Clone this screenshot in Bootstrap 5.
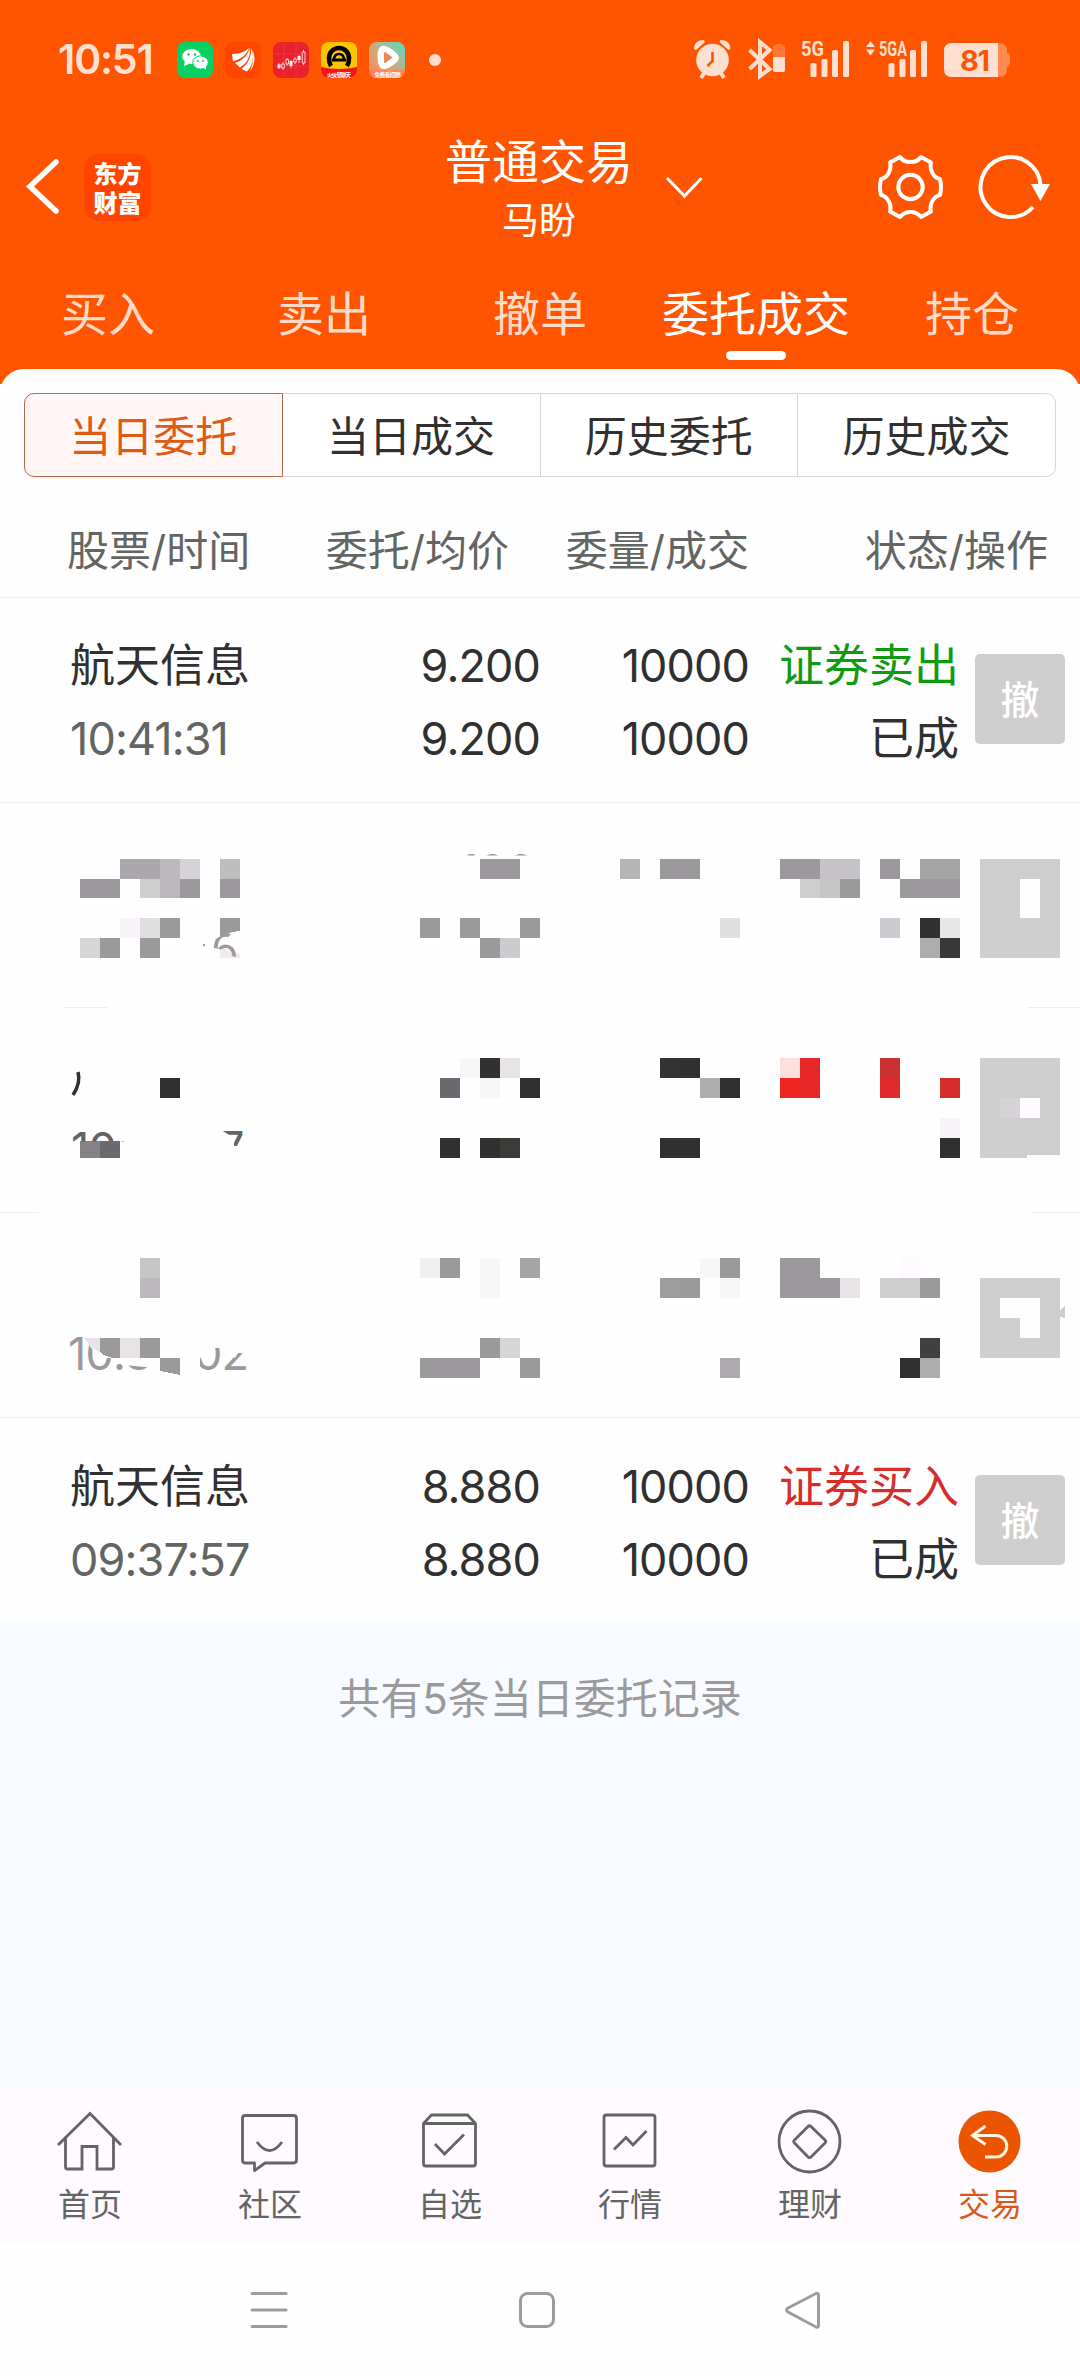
<!DOCTYPE html>
<html lang="zh-CN">
<head>
<meta charset="utf-8">
<meta name="viewport" content="width=device-width, initial-scale=1">
<title>普通交易</title>
<link href="https://cdn.jsdelivr.net/npm/bootstrap@5.3.0/dist/css/bootstrap.min.css" rel="stylesheet">
<style>
  body { width: 1080px; height: 2376px; overflow: hidden; background: #fefefe; color: #303030;
    font-family: Inter, "Noto Sans CJK SC", sans-serif; font-size: 45px; line-height: 1; }
  svg { display: block; flex: none; }
  .top-zone { background: #ff5500; height: 384px; }
  .status-strip { height: 120px; padding: 0 70px 0 58px; color: #ffdfcf; }
  .clock { font-size: 41px; font-weight: 600; width: 119px; letter-spacing: -1.2px; margin-top: -2px; }
  .title-bar { height: 134px; padding-left: 26px; padding-right: 29px; }
  .brand-tile { width: 67px; height: 67px; margin-left: 25px; padding-bottom: 1px; border-radius: 15px; background: #ff4400; font: 900 24px/29px "Noto Sans CJK SC", sans-serif; }
  .title-main { font-size: 47px; line-height: 64px; padding-top: 4px; }
  .title-sub { font-size: 37px; line-height: 54px; }
  .trade-tabs { height: 115px; }
  .trade-tabs .nav-link { flex: 0 0 216px; width: 216px; padding: 35px 0 0; font-size: 47px; line-height: 50px; color: #ffdbc8; border-radius: 0; height: 115px; text-align: center; }
  .trade-tabs .nav-link.active { color: #fff; background: none; }
  .trade-tabs .active::after { content: ""; display: block; width: 60px; height: 9px; border-radius: 5px; background: #fff; margin: 12px auto 0; }
  .sheet { background: #fefefe; border-radius: 24px 24px 0 0; margin-top: -15px; height: 132px; padding: 24px 24px 0; }
  .seg .btn { height: 84px; padding: 4px 0 0; font-size: 42px; line-height: 1; color: #303030; background: #fff; border: 1px solid #d6d5da; border-radius: 10px; }
  .seg .btn.active { color: #dd5b12; background: #fff6f5; border-color: #b5694a; }
  .col-heads { height: 97px; padding: 3px 32px 0 67px; color: #636563; font-size: 42px; border-bottom: 1px solid #eee; box-shadow: inset 0 1px #fafafa; white-space: nowrap; }
  .order-row { height: 205px; padding: 4px 15px 0 70px; line-height: 73px; border-bottom: 1px solid #eee; }
  .order-row:last-child { border-bottom: 0; }
  .c-name { width: 239px; } .c-price { width: 231px; } .c-qty { width: 209px; } .c-state { width: 210px; }
  .num { letter-spacing: -.9px; }
  .time-text { color: #636563; }
  .sell { color: #109a10; } .buy { color: #d62d2b; }
  .btn-cancel { width: 90px; height: 90px; margin-top: -6px; padding: 0; border: 0; border-radius: 5px; background: #cecece; color: #fff; font-size: 39px; font-weight: 500; line-height: 92px; }
  .masked { height: 205px; shape-rendering: crispEdges; }
  .rest { height: 465px; background: #f7faff; color: #9c999b; font-size: 42px; padding-top: 55px; }
  .dock { height: 156px; background: #fefaff; color: #636563; font-size: 32px; }
  .dock > div { width: 180px; padding-top: 17px; line-height: 46px; }
  .dock svg { margin-bottom: 5px; }
  .dock .on { color: #d95a18; }
  .sys { height: 132px; }
</style>
</head>
<body>
<header class="top-zone">
  <div class="status-strip d-flex align-items-center">
    <span class="clock">10:51</span>
    <svg width="270" height="40" viewBox="177 40 270 40">
      <defs>
        <linearGradient id="vid" x1="0" y1="1" x2="1" y2="0"><stop offset="0" stop-color="#ff8a50"/><stop offset=".45" stop-color="#d8a478"/><stop offset="1" stop-color="#4fe0c8"/></linearGradient>
        <clipPath id="tile4"><rect x="321" y="42" width="36" height="36" rx="8"/></clipPath>
        <clipPath id="tile5"><rect x="369" y="42" width="36" height="36" rx="8"/></clipPath>
      </defs>
      <rect x="177" y="42" width="36" height="36" rx="8" fill="#07d165"/>
      <ellipse cx="191.500" cy="56.500" rx="9.300" ry="7.500" fill="#fff"/><path d="M185 61l-1 5 5-2z" fill="#fff"/>
      <ellipse cx="200.500" cy="62.500" rx="7.800" ry="6.600" fill="#fff" stroke="#07d165"/><path d="M203 67l3 3v-5z" fill="#fff"/>
      <g fill="#07d165"><circle cx="188.500" cy="54.500" r="1.200"/><circle cx="195" cy="54.500" r="1.200"/><circle cx="198" cy="61" r="1"/><circle cx="203" cy="61" r="1"/></g>
      <rect x="225" y="42" width="36" height="36" rx="8" fill="#ff4500"/>
      <path d="M232 54Q243 54 249 48Q247 57 233 61.500ZM235 63Q247 59 250 48Q251 61 240 67.500ZM241.500 69Q251 62 251.500 48Q256 62 247 71.500ZM249 72Q255 63 252.500 50Q258 62 249 72Z" fill="#fff"/>
      <rect x="273" y="42" width="36" height="36" rx="8" fill="#e8212c"/>
      <path d="M274 54h34M274 66h34M284 43v34M296 43v34" stroke="#f04a50" stroke-width=".5"/>
      <path d="M279 63v6M283 62v8M287 58v8M291 60v8M295 57v7M299 55v8M303.500 50v15" stroke="#ffd9d9" stroke-width=".8"/>
      <path d="M277.500 64.500h3v3.500h-3zM289.500 61h3v5h-3zM297.500 56h3v4h-3z" fill="#fff"/>
      <path d="M281.700 64h2.600v4h-2.600zM286 59.500h2.500v4.500H286zM293.700 59h2.600v3h-2.600zM302.200 52h2.800v11h-2.800z" fill="#e8212c" stroke="#fff" stroke-width=".8"/>
      <g clip-path="url(#tile4)"><rect x="321" y="42" width="36" height="36" fill="#ffc400"/><path d="M321 67q18 4 36 0v11h-36z" fill="#f0141e"/>
        <path d="M331 66q-2-3-2-8a10 10 0 0 1 20 0q0 5-2 8" fill="none" stroke="#000" stroke-width="4.600"/><path d="M332 60h14" stroke="#000" stroke-width="3"/><path d="M334 60q0-6 5-6t5 6" fill="none" stroke="#000" stroke-width="2.400"/>
        <text x="339" y="76.500" font-size="5.600" font-weight="700" fill="#fff" text-anchor="middle" textLength="24">火伙皇聊天</text></g>
      <g clip-path="url(#tile5)"><rect x="369" y="42" width="36" height="36" fill="url(#vid)"/><path d="M369 67q18 6 36 2v9h-36z" fill="#fb8458"/>
        <path d="M382 48c-4 2-3 18 1 19 3 1 14-6 14-9s-11-12-15-10z" fill="#fff" stroke="#fff" stroke-width="4" stroke-linejoin="round"/><path d="M385 53v9l6-4.500z" fill="#e58b50" stroke="#e58b50" stroke-width="2" stroke-linejoin="round"/>
        <text x="387.500" y="76.500" font-size="5.600" font-weight="700" fill="#fff" text-anchor="middle" textLength="26">免费看短剧</text></g>
      <circle cx="435" cy="60" r="6" fill="#ffdfcf"/>
    </svg>
    <svg class="ms-auto" width="317" height="60" viewBox="693 30 317 60" fill="#ffdfcf">
      <circle cx="712.500" cy="60" r="16.300"/><path d="M704 73l-3 5M721 73l3 5" stroke="#ffdfcf" stroke-width="4"/>
      <path d="M694 49c0-6 4-9 10-9l1 2-9 8zM730.500 49c0-6-4-9-10-9l-1 2 9 8z"/>
      <path d="M712.500 52v9l-5 5" fill="none" stroke="#ff5500" stroke-width="2.600"/>
      <path d="M749.500 50l20 19-9.500 7V42l9.500 8-20 19" fill="none" stroke="#ffdfcf" stroke-width="4"/>
      <path d="M773 57v-10q0-2 2-2h1v-1h6v1h1q2 0 2 2v10z" fill="#ff7733"/><path d="M773 57h12v13q0 2-2 2h-8q-2 0-2-2z"/>
      <text x="801" y="55.500" font-family="Roboto" font-size="21" font-weight="700" textLength="23" lengthAdjust="spacingAndGlyphs">5G</text>
      <text x="879" y="55.500" font-family="Roboto" font-size="21" font-weight="700" textLength="28" lengthAdjust="spacingAndGlyphs">5GA</text>
      <g id="bars"><rect x="810.500" y="63" width="6" height="14" rx="1.500"/><rect x="821.500" y="59" width="6" height="18" rx="1.500"/><rect x="832" y="50" width="6" height="27" rx="1.500"/><rect x="843" y="41" width="6" height="36" rx="1.500"/></g>
      <use href="#bars" x="78"/>
      <path d="M866 47l4.500-6 4.500 6zM866 49.500l4.500 6 4.500-6z"/>
      <path d="M952 43h46v34h-46q-8 0-8-8V51q0-8 8-8z"/><path d="M998 43q9 0 9 8v2q3 0 3 7t-3 7v2q0 8-9 8z" fill="#ff8a50"/>
      <text x="975" y="71" font-size="29" font-weight="700" fill="#f4560a" text-anchor="middle" textLength="30">81</text>
    </svg>
  </div>

  <div class="title-bar d-flex align-items-center text-white">
    <svg width="33" height="60" viewBox="26 158 33 60"><path d="M56 163L30 187.500 56 212" fill="none" stroke="#fff" stroke-width="5.500" stroke-linecap="round"/></svg>
    <div class="brand-tile text-center d-flex flex-column justify-content-center"><span>东方</span><span>财富</span></div>
    <div class="text-center" style="margin-left:294px">
      <div class="title-main">普通交易</div><div class="title-sub">马盼</div>
    </div>
    <svg class="ms-auto" width="386" height="70" viewBox="665 152 386 70" fill="none" stroke="#fff" stroke-width="4">
      <path d="M667 178l17.500 18 17-18" stroke-width="3"/>
      <circle cx="910.500" cy="187" r="12.200"/>
      <path d="M890 162.500L900 157Q903.500 162 910.500 162T921 157L931 162.500C929 170 934 178 940 179Q942 187 940 195C934 196 929 204 931 211.500L921 217Q917 212 910.500 212T900 217L890 211.500C892 204 887 196 881 195Q879 187 881 179C887 178 892 170 890 162.500Z" stroke-linejoin="round"/>
      <path d="M1040.500 185A30 30 0 1 0 1033 207"/><path d="M1031 184h19l-9.500 17z" fill="#fff" stroke="none"/>
    </svg>
  </div>

  <nav class="trade-tabs nav nav-pills flex-nowrap">
    <a class="nav-link">买入</a><a class="nav-link">卖出</a><a class="nav-link">撤单</a><a class="nav-link active">委托成交</a><a class="nav-link">持仓</a>
  </nav>
</header>

<main>
  <section class="sheet position-relative">
    <div class="seg btn-group w-100">
      <button class="btn col active">当日委托</button><button class="btn col">当日成交</button><button class="btn col">历史委托</button><button class="btn col">历史成交</button>
    </div>
  </section>
  <div class="col-heads d-flex align-items-center">
    <span style="width:202px">股票/时间</span><span class="text-end" style="width:240px">委托/均价</span><span class="text-end" style="width:240px">委量/成交</span><span class="text-end flex-fill">状态/操作</span>
  </div>

  <div class="orders">
    <div class="order-row d-flex align-items-center">
      <div class="c-name"><div>航天信息</div><div class="time-text num">10:41:31</div></div>
      <div class="c-price num text-end">9.200<br>9.200</div>
      <div class="c-qty num text-end">10000<br>10000</div>
      <div class="c-state text-end"><div class="sell">证券卖出</div><div>已成</div></div>
      <button class="btn btn-cancel ms-auto">撤</button>
    </div>

    <svg class="masked" width="1080" height="205" viewBox="0 803 1080 205">
      <defs>
        <clipPath id="c2a"><rect x="465" y="850" width="75" height="5.500"/></clipPath>
        <clipPath id="c2b"><path d="M214 948V940L224 934H231L222 944Q236 944 236 957L232 956L220 949Z"/></clipPath>
      </defs>
      <g fill="#9c999d">
        <path fill="#aaa8ac" d="M120 859h40v20h-40z"/><path fill="#bbb9bd" d="M160 859h20v39h-20z"/><path fill="#d5d3d7" d="M180 859h20v20h-20z"/><path fill="#bebebe" d="M220 859h20v20h-20z"/>
        <path d="M80 879h40v19H80zM180 879h20v19h-20zM220 879h20v19h-20z"/><path fill="#cecece" d="M140 879h20v19h-20z"/>
        <path fill="#f7f3f8" d="M120 918h20v20h-20z"/><path fill="#dfdfdf" d="M140 918h20v20h-20z"/><path d="M160 918h20v20h-20zM220 918h20v13q-12 1-15 5h-5z"/>
        <path fill="#d6d6d6" d="M80 938h20v20H80z"/><path d="M100 938h20v20h-20zM140 938h20v20h-20z"/><path fill="#edebee" d="M220 947l20 7v4h-20z"/>
        <path d="M480 859h40v20h-40zM420 918h20v20h-20zM460 918h20v20h-20zM520 918h20v20h-20zM480 938h20v20h-20z"/><path fill="#cdcbcf" d="M500 938h20v20h-20zM880 918h20v20h-20z"/>
        <path fill="#b5b5b5" d="M620 859h20v20h-20z"/><path d="M660 859h40v20h-40z"/><path fill="#dfdfdf" d="M720 918h20v20h-20z"/>
        <path d="M780 859h40v20h-40zM840 879h20v19h-20zM880 859h20v20h-20zM900 879h60v19h-60z"/><path fill="#c5c3c7" d="M820 859h40v20h-40z"/><path fill="#cecece" d="M800 879h20v19h-20z"/><path fill="#c6c6c6" d="M820 879h20v19h-20z"/><path fill="#a5a5a5" d="M920 859h40v20h-40z"/>
        <path fill="#303030" d="M920 918h20v20h-20z"/><path fill="#e7e7e7" d="M940 918h20v20h-20z"/><path fill="#adadad" d="M920 938h20v20h-20z"/><path fill="#383838" d="M940 938h20v20h-20z"/>
        <path fill="#cecece" fill-rule="evenodd" d="M980 859h80v99h-80zM1020 879v39h20v-39z"/>
        <path fill="#eee" d="M64 1007h43v1H64zM1028 1007h52v1h-52z"/><circle cx="204" cy="945" r="1.200"/>
      </g>
      <g fill="#9c999b" font-size="45"><text x="460" y="887" clip-path="url(#c2a)">100</text><text x="211" y="966" clip-path="url(#c2b)">6</text></g>
    </svg>

    <svg class="masked" width="1080" height="205" viewBox="0 1008 1080 205">
      <defs><clipPath id="c3a"><rect x="70" y="1128" width="55" height="13.500"/></clipPath><clipPath id="c3b"><path d="M218 1128h30v18h-14v-8z"/></clipPath></defs>
      <path d="M78 1072q3 11-5 23" fill="none" stroke="#303030" stroke-width="3.500" shape-rendering="auto"/>
      <g fill="#303030">
        <path d="M160 1078h20v20h-20zM480 1058h20v20h-20zM520 1078h20v20h-20zM440 1138h20v20h-20zM480 1138h20v20h-20zM680 1058h20v20h-20zM720 1078h20v20h-20zM660 1138h40v20h-40zM940 1138h20v20h-20z"/>
        <path fill="#f7f7f7" d="M460 1058h20v20h-20zM480 1078h20v20h-20z"/><path fill="#e7e3e7" d="M500 1058h20v20h-20z"/><path fill="#6b696d" d="M440 1078h20v20h-20zM100 1141h20v17h-20z"/><path fill="#848284" d="M80 1141h20v17H80z"/><path fill="#3a3c38" d="M500 1138h20v20h-20z"/><path fill="#313431" d="M660 1058h20v20h-20z"/><path fill="#adadad" d="M700 1078h20v20h-20z"/>
        <path fill="#ffdfde" d="M780 1058h20v20h-20z"/><path fill="#e62829" d="M800 1058h20v40h-20z"/><path fill="#ee2520" d="M780 1078h20v20h-20z"/><path fill="#cc3033" d="M880 1058h20v20h-20z"/><path fill="#de2b2a" d="M880 1078h20v20h-20z"/><path fill="#d42d2b" d="M940 1078h20v20h-20z"/><path fill="#f7f3f7" d="M940 1118h20v20h-20z"/>
        <path fill="#cecece" d="M980 1058h80v97h-33v3h-47z"/><path fill="#d5d3d6" d="M1000 1098h20v20h-20z"/><path fill="#fefaff" d="M1020 1098h20v20h-20z"/>
        <path fill="#eee" d="M0 1212h39v1H0zM1031 1212h49v1h-49z"/>
      </g>
      <g fill="#636563" font-size="45" letter-spacing="-.9"><text x="71" y="1165" clip-path="url(#c3a)">10:</text><text x="219" y="1164" clip-path="url(#c3b)">7</text></g>
    </svg>

    <svg class="masked" width="1080" height="205" viewBox="0 1213 1080 205">
      <defs><clipPath id="c4a"><path d="M66 1333h17q10 26 29 25h13v7l20 2h6v8H66z"/></clipPath><clipPath id="c4b"><path d="M200 1358h10l4-10h6l15 10 3-5h12v20h-50z"/></clipPath></defs>
      <g fill="#9c999d">
        <path fill="#c6c6c6" d="M140 1258h20v20h-20z"/><path fill="#bbb9bd" d="M140 1278h20v20h-20z"/>
        <path fill="#efefef" d="M420 1258h20v20h-20z"/><path d="M440 1258h20v20h-20z"/><path fill="#f7f7f7" d="M480 1258h20v40h-20zM700 1258h20v20h-20zM720 1278h20v20h-20z"/><path fill="#a5a5a5" d="M520 1258h20v20h-20z"/>
        <path fill="#e7e3e7" d="M84 1338h16v15q-8-4-16-15zM120 1338h20v20h-20zM840 1278h20v20h-20z"/><path d="M100 1338h20v20h-7q-9-2-13-6zM140 1338h20v20h-20zM160 1358h20v17l-20-4z"/>
        <path d="M480 1338h20v20h-20zM420 1358h60v20h-60zM520 1358h20v20h-20z"/><path fill="#d6d6d6" d="M500 1338h20v20h-20z"/>
        <path d="M720 1258h20v20h-20zM680 1278h20v20h-20z"/><path fill="#9c9e9b" d="M660 1278h20v20h-20z"/><path fill="#adabaf" d="M720 1358h20v20h-20z"/>
        <path d="M780 1258h40v20h20v20h-60zM920 1278h20v20h-20z"/><path fill="#cecece" d="M880 1278h40v20h-40z"/><path fill="#fefaff" d="M900 1258h20v20h-20z"/>
        <path fill="#404040" d="M920 1338h20v20h-20z"/><path fill="#303030" d="M900 1358h20v20h-20z"/><path fill="#adadad" d="M920 1358h20v20h-20z"/>
        <path fill="#cecece" fill-rule="evenodd" d="M980 1278h80v32l5-4v12l-5-1v41h-80zM1000 1298v20h20v20h20v-40z"/>
        <path fill="#eee" d="M0 1417h1080v1H0z"/>
      </g>
      <g fill="#9c999b" font-size="45" letter-spacing="-.9"><text x="68" y="1370" clip-path="url(#c4a)">10:3</text><text x="194" y="1370" clip-path="url(#c4b)">02</text></g>
    </svg>

    <div class="order-row d-flex align-items-center">
      <div class="c-name"><div>航天信息</div><div class="time-text num">09:37:57</div></div>
      <div class="c-price num text-end">8.880<br>8.880</div>
      <div class="c-qty num text-end">10000<br>10000</div>
      <div class="c-state text-end"><div class="buy">证券买入</div><div>已成</div></div>
      <button class="btn btn-cancel ms-auto">撤</button>
    </div>
  </div>
  <div class="rest text-center">共有5条当日委托记录</div>
</main>

<nav class="dock d-flex text-center">
  <div><svg class="mx-auto" width="70" height="72" viewBox="55 2105 70 72" fill="none" stroke="#636563" stroke-width="2.800"><path d="M58 2145l32-31.500 31 31.500M65.500 2138v29q0 2 2 2H82v-22.500h15V2169h14.500q2 0 2-2v-29"/></svg>首页</div>
  <div><svg class="mx-auto" width="70" height="72" viewBox="235 2105 70 72" fill="none" stroke="#636563" stroke-width="2.800" stroke-linejoin="round"><path d="M245 2115.500h48.500q3 0 3 3V2160q0 3-3 3H265l-10.500 7.500V2163H245q-2.500 0-2.500-3v-41.500q0-3 2.500-3z"/><path d="M257 2142q12.500 17 25 0"/></svg>社区</div>
  <div><svg class="mx-auto" width="70" height="72" viewBox="415 2105 70 72" fill="none" stroke="#636563" stroke-width="2.800"><path d="M423.500 2123.500l8-8.500h36l8 8.500v40q0 2.500-2.500 2.500H426q-2.500 0-2.500-2.500zh52M435 2144l9.500 10 19.500-19.500"/></svg>自选</div>
  <div><svg class="mx-auto" width="70" height="72" viewBox="595 2105 70 72" fill="none" stroke="#636563" stroke-width="2.800"><rect x="604" y="2115" width="51" height="51" rx="2.500"/><path d="M614 2149.500l12-12 7 7.500 13.500-14"/></svg>行情</div>
  <div><svg class="mx-auto" width="70" height="72" viewBox="775 2105 70 72" fill="none" stroke="#636563" stroke-width="2.800" stroke-linejoin="round"><circle cx="809.500" cy="2141.500" r="30.500"/><path d="M808 2126.500q1.500-1.500 3 0l14 13.500q1.500 1.500 0 3l-14 14q-1.500 1.500-3 0l-13.500-14q-1.500-1.500 0-3z"/></svg>理财</div>
  <div class="on"><svg class="mx-auto" width="70" height="72" viewBox="955 2105 70 72" fill="none" stroke="#fff3e4" stroke-width="3"><circle cx="989.500" cy="2141.500" r="31" fill="#eb5500" stroke="none"/><path d="M985.500 2126l-13 9.500 13 9M973 2135.500h23a10.700 10.700 0 0 1 0 21.500h-11"/></svg>交易</div>
</nav>
<footer class="sys">
  <svg width="1080" height="132" viewBox="0 2244 1080 132" fill="none" stroke="#9c9c9c" stroke-width="3">
    <path d="M252 2293.500h34M252 2310h34M252 2326.500h34" stroke-linecap="round"/><rect x="520.500" y="2293.500" width="33" height="33" rx="7"/>
    <path d="M816 2293.500q2.500-1 2.500 2v29.500q0 3-2.500 2l-28-15q-3-2 0-4z"/>
  </svg>
</footer>
<script src="https://cdn.jsdelivr.net/npm/bootstrap@5.3.0/dist/js/bootstrap.bundle.min.js"></script>
</body>
</html>
